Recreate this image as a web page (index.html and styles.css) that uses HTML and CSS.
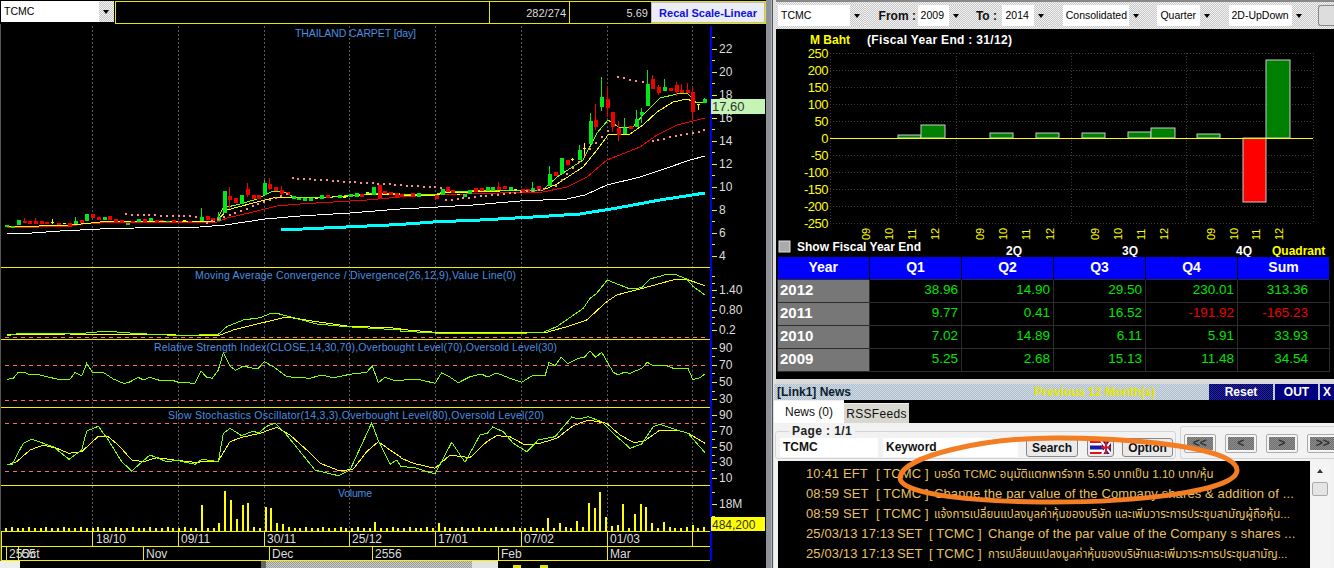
FILE: index.html
```html
<!DOCTYPE html>
<html>
<head>
    <title>TCMC Chart</title>
    <link rel="stylesheet" href="styles.css">
</head>
<body>
<div class="screen">

    <!-- Left: price chart -->
    <div class="chart-side">
        <div class="chart-top">
            <div class="combo combo-symbol">
                <div class="combo-field">TCMC</div>
                <div class="combo-arrow"></div>
            </div>
            <div class="info-bar">
                <div class="info-cell info-wide"></div>
                <div class="info-cell info-count">282/274</div>
                <div class="info-cell info-val">5.69</div>
                <button class="recal-button">Recal Scale-Linear</button>
            </div>
        </div>

        <svg id="chart" class="chart" viewBox="0 24 766 537" width="766" height="537">
            <g id="grid"></g>
            <g id="series"></g>

            <g class="pane-title">
                <text x="295" y="37" textLength="121">THAILAND CARPET [day]</text>
                <text x="195" y="279" textLength="321">Moving Average Convergence / Divergence(26,12,9),Value Line(0)</text>
                <text x="154" y="351" textLength="403">Relative Strength Index(CLOSE,14,30,70),Overbought Level(70),Oversold Level(30)</text>
                <text x="168" y="419" textLength="376">Slow Stochastics Oscillator(14,3,3),Overbought Level(80),Oversold Level(20)</text>
                <text x="338" y="497" textLength="34">Volume</text>
            </g>

            <g class="axis-label">
                <text x="719" y="53">22</text>
                <text x="719" y="76">20</text>
                <text x="719" y="99">18</text>
                <text x="719" y="122">16</text>
                <text x="719" y="145">14</text>
                <text x="719" y="168">12</text>
                <text x="719" y="191">10</text>
                <text x="719" y="214">8</text>
                <text x="719" y="237">6</text>
                <text x="719" y="260">4</text>
                <text x="719" y="294">1.40</text>
                <text x="719" y="314">0.80</text>
                <text x="719" y="334">0.2</text>
                <text x="719" y="352">90</text>
                <text x="719" y="369">70</text>
                <text x="719" y="386">50</text>
                <text x="719" y="403">30</text>
                <text x="719" y="419">90</text>
                <text x="719" y="435">70</text>
                <text x="719" y="451">50</text>
                <text x="719" y="466">30</text>
                <text x="719" y="482">10</text>
                <text x="719" y="508">18M</text>
            </g>

            <rect class="badge-last" x="711" y="99" width="54" height="15"></rect>
            <text class="badge-text" x="712" y="111">17.60</text>
            <rect class="badge-vol" x="711" y="517" width="54" height="14"></rect>
            <text class="badge-text small" x="712" y="529">484,200</text>

            <g class="axis-label">
                <text x="96" y="543">18/10</text>
                <text x="181" y="543">09/11</text>
                <text x="267" y="543">30/11</text>
                <text x="352" y="543">25/12</text>
                <text x="438" y="543">17/01</text>
                <text x="524" y="543">07/02</text>
                <text x="610" y="543">01/03</text>
                <text x="9" y="558">2555</text>
                <text x="21" y="558">Oct</text>
                <text x="146" y="558">Nov</text>
                <text x="272" y="558">Dec</text>
                <text x="375" y="558">2556</text>
                <text x="501" y="558">Feb</text>
                <text x="610" y="558">Mar</text>
            </g>
        </svg>

        <div class="hscroll">
            <div class="hscroll-btn"></div>
            <div class="hscroll-track"></div>
            <div class="hscroll-grip"></div>
            <div class="hscroll-thumb"></div>
            <div class="hscroll-end"></div>
            <div class="hscroll-mark"></div>
            <div class="hscroll-mark"></div>
        </div>
    </div>

    <div class="divider"></div>

    <!-- Right: financials + news -->
    <div class="info-side">
        <div class="fin-panel">
            <div class="toolbar">
                <div class="combo combo-name"><div class="combo-field">TCMC</div><div class="combo-arrow"></div></div>
                <span class="tool-label from-label">From :</span>
                <div class="combo combo-year"><div class="combo-field">2009</div><div class="combo-arrow"></div></div>
                <span class="tool-label to-label">To :</span>
                <div class="combo combo-year"><div class="combo-field">2014</div><div class="combo-arrow"></div></div>
                <div class="combo combo-cons"><div class="combo-field">Consolidated</div><div class="combo-arrow"></div></div>
                <div class="combo combo-quarter"><div class="combo-field">Quarter</div><div class="combo-arrow"></div></div>
                <div class="combo combo-mode"><div class="combo-field">2D-UpDown</div><div class="combo-arrow"></div></div>
                <div class="tool-stub"></div>
            </div>

            <svg class="bars" viewBox="776 29 558 228" width="558" height="228">
                <text class="bars-unit" x="810" y="44">M Baht</text>
                <text class="bars-head" x="867" y="44" textLength="145">(Fiscal Year End : 31/12)</text>

                <path class="bars-grid" d="M830 53.5H1313M830 70.5H1313M830 87.5H1313M830 104.5H1313M830 121.5H1313M830 155.5H1313M830 172.5H1313M830 189.5H1313M830 206.5H1313M830 223.5H1313M830.5 53V223M956.5 53V223M1071.5 53V223M1186.5 53V223M1313.5 53V223"/>

                <rect class="bar-up" x="898" y="135" width="23" height="3"/>
                <rect class="bar-up" x="921" y="125" width="24" height="13"/>
                <rect class="bar-up" x="990" y="133" width="23" height="5"/>
                <rect class="bar-up" x="1036" y="133" width="23" height="5"/>
                <rect class="bar-up" x="1082" y="133" width="23" height="5"/>
                <rect class="bar-up" x="1128" y="132" width="23" height="6"/>
                <rect class="bar-up" x="1151" y="128" width="24" height="10"/>
                <rect class="bar-up" x="1197" y="134" width="23" height="4"/>
                <rect class="bar-up" x="1266" y="60" width="24" height="78"/>
                <rect class="bar-down" x="1243" y="138" width="23" height="64"/>
                <path class="bars-zero" d="M830 138.5H1313"/>

                <g class="bars-y">
                    <text x="828" y="58">250</text>
                    <text x="828" y="75">200</text>
                    <text x="828" y="92">150</text>
                    <text x="828" y="109">100</text>
                    <text x="828" y="126">50</text>
                    <text x="828" y="143">0</text>
                    <text x="828" y="160">-50</text>
                    <text x="828" y="177">-100</text>
                    <text x="828" y="194">-150</text>
                    <text x="828" y="211">-200</text>
                    <text x="828" y="228">-250</text>
                </g>

                <g class="bars-x">
                    <text transform="translate(870 240) rotate(-90)">09</text>
                    <text transform="translate(893 240) rotate(-90)">10</text>
                    <text transform="translate(916 240) rotate(-90)">11</text>
                    <text transform="translate(939 240) rotate(-90)">12</text>
                    <text transform="translate(984 240) rotate(-90)">09</text>
                    <text transform="translate(1007 240) rotate(-90)">10</text>
                    <text transform="translate(1030 240) rotate(-90)">11</text>
                    <text transform="translate(1054 240) rotate(-90)">12</text>
                    <text transform="translate(1099 240) rotate(-90)">09</text>
                    <text transform="translate(1122 240) rotate(-90)">10</text>
                    <text transform="translate(1145 240) rotate(-90)">11</text>
                    <text transform="translate(1168 240) rotate(-90)">12</text>
                    <text transform="translate(1215 240) rotate(-90)">09</text>
                    <text transform="translate(1238 240) rotate(-90)">10</text>
                    <text transform="translate(1260 240) rotate(-90)">11</text>
                    <text transform="translate(1283 240) rotate(-90)">12</text>
                </g>

                <rect class="bars-check" x="779" y="241" width="11" height="11"/>
                <text class="bars-head" x="797" y="251" textLength="124">Show Fiscal Year End</text>
                <text class="bars-head" x="1006" y="255">2Q</text>
                <text class="bars-head" x="1122" y="255">3Q</text>
                <text class="bars-head" x="1236" y="255">4Q</text>
                <text class="bars-unit" x="1272" y="255">Quadrant</text>
            </svg>

            <table class="fin-table">
                <tr><th>Year</th><th>Q1</th><th>Q2</th><th>Q3</th><th>Q4</th><th>Sum</th></tr>
                <tr><td>2012</td><td>38.96</td><td>14.90</td><td>29.50</td><td>230.01</td><td>313.36</td></tr>
                <tr><td>2011</td><td>9.77</td><td>0.41</td><td>16.52</td><td class="neg">-191.92</td><td class="neg">-165.23</td></tr>
                <tr><td>2010</td><td>7.02</td><td>14.89</td><td>6.11</td><td>5.91</td><td>33.93</td></tr>
                <tr><td>2009</td><td>5.25</td><td>2.68</td><td>15.13</td><td>11.48</td><td>34.54</td></tr>
            </table>
        </div>

        <div class="news-panel">
            <div class="news-head">
                <span class="news-title">[Link1] News</span>
                <span class="news-period">Previous 12 Month(s)</span>
                <button class="head-btn btn-reset">Reset</button>
                <button class="head-btn btn-out">OUT</button>
                <button class="head-btn btn-x">X</button>
            </div>

            <div class="news-tabs">
                <div class="tab active">News (0)</div>
                <div class="tab">RSSFeeds</div>
            </div>

            <div class="news-form">
                <fieldset class="search-group">
                    <legend>Page : 1/1</legend>
                    <div class="field field-symbol">TCMC</div>
                    <div class="field field-keyword">Keyword</div>
                    <button class="form-btn btn-search">Search</button>
                    <button class="form-btn btn-flag">
                        <svg width="21" height="13" viewBox="0 0 21 13">
                            <rect width="21" height="13" fill="#fff"/>
                            <rect width="21" height="2" fill="#e01020"/>
                            <rect y="11" width="21" height="2" fill="#e01020"/>
                            <rect y="4.5" width="21" height="4" fill="#1818a0"/>
                            <path d="M11 0L21 0V13H14Z" fill="#20207a"/>
                            <path d="M11 0L21 13M21 0L12 13" stroke="#fff" stroke-width="2"/>
                            <path d="M16 0V13M11 6.5H21" stroke="#e01020" stroke-width="2"/>
                        </svg>
                    </button>
                    <button class="form-btn btn-option">Option</button>
                </fieldset>
                <div class="nav-group">
                    <button class="nav-btn"><span>&lt;&lt;</span></button>
                    <button class="nav-btn"><span>&lt;</span></button>
                    <button class="nav-btn"><span>&gt;</span></button>
                    <button class="nav-btn nav-last"><span>&gt;&gt;</span></button>
                </div>
            </div>

            <div class="news-body">
                <div class="news-list">
                    <div class="news-row"><span>10:41</span><span>EFT</span><span>[ TCMC ]</span><span class="thai">บอร์ด TCMC อนุมัติแตกพาร์จาก 5.50 บาทเป็น 1.10 บาท/หุ้น</span></div>
                    <div class="news-row"><span>08:59</span><span>SET</span><span>[ TCMC ]</span><span>Change  the par value of the Company shares &amp; addition of ...</span></div>
                    <div class="news-row"><span>08:59</span><span>SET</span><span>[ TCMC ]</span><span class="thai">แจ้งการเปลี่ยนแปลงมูลค่าหุ้นของบริษัท และเพิ่มวาระการประชุมสามัญผู้ถือหุ้น...</span></div>
                    <div class="news-row dated"><span>25/03/13 17:13</span><span>SET</span><span>[ TCMC ]</span><span>Change of the par value of the Company s shares ...</span></div>
                    <div class="news-row dated"><span>25/03/13 17:13</span><span>SET</span><span>[ TCMC ]</span><span class="thai">การเปลี่ยนแปลงมูลค่าหุ้นของบริษัทและเพิ่มวาระการประชุมสามัญ...</span></div>
                </div>
                <div class="vscroll">
                    <div class="vscroll-up"></div>
                    <div class="vscroll-thumb"></div>
                </div>
            </div>
        </div>
    </div>

    <!-- Hand drawn marker over the news -->
    <svg class="scribble" viewBox="0 0 1334 568" width="1334" height="568">
        <path d="M900 477C903 456 985 437 1062 438C1150 439 1236 449 1237 470C1238 492 1130 503 1040 502C962 501 898 493 900 477Z"/>
    </svg>
</div>

<script src="chart.js"></script>
</body>
</html>
```

FILE: styles.css
```css
* {
    box-sizing: border-box;
}

body {
    margin: 0;
    background: #000;
    font-family: "Liberation Sans", Arial, sans-serif;
    overflow: hidden;
}

button {
    font-family: inherit;
    padding: 0;
}

.screen {
    position: relative;
    display: grid;
    grid-template-columns: 766px 10px 558px;
    width: 1334px;
    height: 568px;
    overflow: hidden;
}

/* Left side */
.chart-side {
    display: flex;
    flex-direction: column;
    height: 568px;
}

.chart-top {
    display: flex;
    height: 24px;
    padding-top: 1px;
    gap: 1px;
}

.combo {
    display: flex;
    background: repeating-conic-gradient(#c4c4c4 0 25%, #f4f4f4 0 50%) 0 0 / 2px 2px;
}

.combo-field {
    flex: 1;
    background: #fff;
    color: #000;
    font-size: 10.5px;
    line-height: 21px;
    padding-left: 3px;
    white-space: nowrap;
}

.combo-arrow {
    position: relative;
    width: 15px;
}

.combo-arrow::after {
    content: "";
    position: absolute;
    left: 4px;
    top: 9px;
    border-left: 3px solid transparent;
    border-right: 3px solid transparent;
    border-top: 4px solid #000;
}

.combo-symbol {
    width: 113px;
    height: 21px;
    margin-left: 1px;
}

.info-bar {
    display: flex;
    width: 651px;
    height: 23px;
    border: 1px solid #e6e600;
}

.info-cell {
    color: #ddd;
    font-size: 11px;
    line-height: 23px;
    text-align: right;
    padding-right: 3px;
    border-right: 1px solid #e6e600;
}

.info-wide {
    width: 374px;
}

.info-count {
    width: 80px;
}

.info-val {
    width: 81px;
    border-right: none;
}

.recal-button {
    width: 114px;
    background: #ececf4;
    color: #1010e0;
    border: 1px solid #bbb;
    font-size: 11px;
    font-weight: bold;
}

.chart {
    display: block;
    flex: none;
}

.pane-title text {
    fill: #4a8fe0;
    font-size: 10.5px;
}

.axis-label text {
    fill: #ddd;
    font-size: 12px;
}

.badge-last {
    fill: #c4f5b4;
}

.badge-vol {
    fill: #ffff00;
}

.badge-text {
    fill: #333;
    font-size: 13px;
}

.badge-text.small {
    font-size: 12px;
}

.hscroll {
    display: flex;
    height: 7px;
}

.hscroll-btn {
    width: 20px;
    background: #eee;
}

.hscroll-track {
    width: 241px;
    background: #000;
}

.hscroll-grip {
    width: 5px;
    background: #666;
}

.hscroll-thumb {
    width: 206px;
    background: repeating-conic-gradient(#999 0 25%, #ccc 0 50%) 0 0 / 2px 2px;
}

.hscroll-end {
    width: 26px;
    background: #e4e4e4;
}

.hscroll-mark {
    width: 8px;
    height: 3px;
    margin: 4px 0 0 15px;
    background: #e6e600;
}

.hscroll-mark + .hscroll-mark {
    margin-left: 19px;
}

.divider {
    background: linear-gradient(to right, #8f9299 0 50%, #aeb2b8 50% 65%, #555 65% 72%, #e0e0e0 72%);
}

/* Right side */
.info-side {
    display: flex;
    flex-direction: column;
    height: 568px;
}

.fin-panel {
    height: 384px;
    padding-bottom: 5px;
    background: #000;
    border-bottom: 5px solid #d8dadc;
}

.toolbar {
    display: flex;
    align-items: center;
    height: 29px;
    padding: 3px 0 3px 2px;
    background: repeating-conic-gradient(#c8c8c8 0 25%, #f2f2f2 0 50%) 0 0 / 2px 2px;
    border-top: 2px solid #888;
}

.toolbar .combo {
    height: 21px;
}

.combo-name {
    width: 88px;
}

.combo-year {
    width: 47px;
}

.combo-cons {
    width: 83px;
    margin-left: 14px;
}

.combo-quarter {
    width: 58px;
    margin-left: 13px;
}

.combo-mode {
    width: 80px;
    margin-left: 14px;
}

.tool-label {
    font-size: 12px;
    font-weight: bold;
    color: #111;
    white-space: nowrap;
}

.from-label {
    width: 37px;
    margin-left: 14px;
    margin-right: 2px;
}

.to-label {
    width: 27px;
    margin-left: 12px;
}

.tool-stub {
    width: 16px;
    height: 21px;
    margin-left: 11px;
    background: #ddd;
    border: 1px solid #888;
    border-right: none;
    border-radius: 3px 0 0 3px;
}

.bars {
    display: block;
}

.bars-unit {
    fill: #ffff00;
    font-size: 12px;
    font-weight: bold;
}

.bars-head {
    fill: #fff;
    font-size: 12px;
    font-weight: bold;
}

.bars-grid {
    stroke: #3c3c3c;
    stroke-dasharray: 1 2;
    fill: none;
}

.bars-zero {
    stroke: #ffff00;
    fill: none;
}

.bar-up {
    fill: #008000;
    stroke: #ccc;
}

.bar-down {
    fill: #ff0000;
    stroke: #ccc;
}

.bars-y text {
    fill: #ffff00;
    font-size: 13px;
    text-anchor: end;
    letter-spacing: -0.5px;
}

.bars-x text {
    fill: #ffff00;
    font-size: 11px;
}

.bars-check {
    fill: #aaa;
    stroke: #ddd;
}

.fin-table {
    width: 553px;
    margin-left: 1px;
    border-collapse: collapse;
    table-layout: fixed;
}

.fin-table th {
    height: 22px;
    padding: 0 0 2px;
    background: #0000ff;
    color: #fff;
    font-size: 14px;
    border-right: 1px solid #000;
}

.fin-table td {
    height: 23px;
    padding: 0 3px 2px 0;
    color: #00e600;
    font-size: 13.5px;
    text-align: right;
    border: 1px solid #2c2c2c;
}

.fin-table td:first-child {
    padding-left: 2px;
    background: repeating-conic-gradient(#666 0 25%, #888 0 50%) 0 0 / 2px 2px;
    color: #fff;
    font-size: 15px;
    font-weight: bold;
    text-align: left;
}

.fin-table td:last-child {
    padding-right: 21px;
}

.fin-table td.neg {
    color: #f00000;
}

.news-panel {
    display: flex;
    flex-direction: column;
    flex: 1;
    min-height: 0;
    margin-left: -2px;
}

.news-head {
    display: flex;
    align-items: stretch;
    height: 16px;
    background: repeating-conic-gradient(#aebccc 0 25%, #d2dce4 0 50%) 0 0 / 2px 2px;
}

.news-title {
    width: 260px;
    padding-left: 3px;
    color: #0a1c2e;
    font-size: 12px;
    font-weight: bold;
    line-height: 16px;
}

.news-period {
    width: 175px;
    color: #e6e600;
    font-size: 12px;
    font-weight: bold;
    line-height: 16px;
}

.head-btn {
    background: #000080;
    color: #fff;
    border: none;
    font-size: 12px;
    font-weight: bold;
}

.btn-reset {
    width: 64px;
    margin-right: 2px;
    background: repeating-conic-gradient(#000070 0 25%, #28288c 0 50%) 0 0 / 2px 2px;
}

.btn-out {
    width: 43px;
    margin-right: 2px;
}

.btn-x {
    width: 14px;
}

.news-tabs {
    display: flex;
    align-items: flex-end;
    height: 23px;
    background: #000;
    padding-left: 0;
}

.tab {
    width: 65px;
    height: 20px;
    background: #d8d8d0;
    color: #111;
    font-size: 12px;
    font-weight: 500;
    line-height: 20px;
    text-align: center;
    letter-spacing: 0.3px;
    border-top: 1px solid #eee;
}

.tab.active {
    width: 70px;
    height: 23px;
    background: #fff;
    line-height: 22px;
    letter-spacing: 0;
}

.news-form {
    display: flex;
    gap: 4px;
    height: 38px;
    background: #f2f2f2;
    padding-left: 1px;
}

.search-group {
    display: flex;
    align-items: center;
    width: 403px;
    height: 33px;
    margin: 3px 0 0 0;
    padding: 0 0 0 4px;
    border: 1px solid #d4d4d4;
    border-radius: 3px;
}

.search-group legend {
    margin-left: 9px;
    padding: 0 3px;
    color: #222;
    font-size: 12px;
    font-weight: bold;
    line-height: 11px;
    letter-spacing: 0.4px;
}

.field {
    height: 19px;
    background: #fff;
    color: #111;
    font-size: 12px;
    font-weight: bold;
    line-height: 19px;
    padding-left: 3px;
}

.field-symbol {
    width: 98px;
    margin-right: 5px;
}

.field-keyword {
    width: 135px;
    margin-right: 8px;
}

.form-btn {
    height: 19px;
    background: #eaeaea;
    color: #111;
    border: 1px solid #888;
    border-radius: 3px;
    font-size: 12px;
    font-weight: bold;
}

.btn-search {
    width: 52px;
    margin-right: 9px;
}

.btn-flag {
    display: flex;
    align-items: center;
    justify-content: center;
    width: 27px;
    margin-right: 8px;
}

.btn-option {
    width: 51px;
}

.nav-group {
    display: flex;
    gap: 9px;
    width: 155px;
    height: 33px;
    margin-top: 3px;
    padding: 7px 0 0 3px;
    border: 1px solid #d4d4d4;
    border-right: none;
    border-radius: 3px 0 0 3px;
    overflow: hidden;
}

.nav-btn {
    flex: none;
    width: 32px;
    height: 19px;
    padding: 2px;
    background: #f4f4f4;
    border: 1px solid #aaa;
    border-radius: 2px;
}

.nav-btn span {
    display: block;
    height: 100%;
    background: repeating-conic-gradient(#707070 0 25%, #8c8c8c 0 50%) 0 0 / 2px 2px;
    color: #333;
    font-size: 12px;
    font-weight: bold;
    line-height: 13px;
}

.news-body {
    display: flex;
    flex: 1;
    min-height: 0;
    padding: 0 4px 0 4px;
    background: #f2f2f2;
}

.news-list {
    flex: 1;
    padding: 3px 0 0 28px;
    background: #000;
    color: #e8c264;
    font-family: "Liberation Sans", "Noto Sans Thai", "Noto Sans CJK SC", sans-serif;
    font-size: 13px;
    letter-spacing: 0.12px;
    overflow: hidden;
}

.news-row {
    display: grid;
    grid-template-columns: 37px 33px 58px 1fr;
    height: 20px;
    line-height: 20px;
    white-space: nowrap;
}

.news-row.dated {
    grid-template-columns: 91px 32px 59px 1fr;
}

.thai {
    font-size: 11.5px;
    letter-spacing: 0;
}

.vscroll {
    width: 20px;
    padding: 0 2px;
    background: #f4f4f4;
}

.vscroll-up {
    position: relative;
    height: 21px;
}

.vscroll-up::after {
    content: "";
    position: absolute;
    left: 5px;
    top: 8px;
    border-left: 3px solid transparent;
    border-right: 3px solid transparent;
    border-bottom: 4px solid #333;
}

.vscroll-thumb {
    height: 14px;
    background: #e4e4e4;
    border: 1px solid #aaa;
    border-radius: 2px;
}

.scribble {
    position: absolute;
    left: 0;
    top: 0;
    pointer-events: none;
}

.scribble path {
    fill: none;
    stroke: #f37d22;
    stroke-width: 5;
}
```

FILE: chart.js
```javascript
const NS = "http://www.w3.org/2000/svg";
const grid = document.getElementById("grid");
const series = document.getElementById("series");

function add(parent, tag, attrs) {
    const el = document.createElementNS(NS, tag);
    for (const k in attrs) el.setAttribute(k, attrs[k]);
    el.setAttribute("shape-rendering", "crispEdges");
    parent.appendChild(el);
    return el;
}

function hline(parent, x1, x2, y, color, extra) {
    add(parent, "line", Object.assign({ x1, x2, y1: y, y2: y, stroke: color }, extra));
}

function vline(parent, x, y1, y2, color, extra) {
    add(parent, "line", Object.assign({ x1: x, x2: x, y1, y2, stroke: color }, extra));
}

// points read off at 3x: "x,y x,y" -> real pixels
function zoomed(str, ox, oy) {
    return str.trim().split(/\s+/).map(p => {
        const [x, y] = p.split(",").map(Number);
        return (ox + x / 3).toFixed(1) + "," + (oy + y / 3).toFixed(1);
    }).join(" ");
}

function poly(points, color, width) {
    add(series, "polyline", { points, fill: "none", stroke: color, "stroke-width": width || 1 });
}

// Grid and pane frames
const YEL = "#f0f000";
const dashes = { "stroke-dasharray": "2 2" };
[92.5, 178.5, 264.5, 349.5, 435.5, 521.5, 607.5, 692.5].forEach(x => {
    vline(grid, x, 26, 531, "#5a5a5a", dashes);
    vline(grid, x, 531, 546, YEL);
});
[267.5, 339.5, 407.5, 485.5].forEach(y => hline(grid, 1, 710, y, YEL));
[531.5, 546.5, 560.5].forEach(y => hline(grid, 1, 710, y, YEL));
vline(grid, 1.5, 531, 561, YEL);
[6.5, 18.5, 143.5, 269.5, 372.5, 498.5, 607.5].forEach(x => vline(grid, x, 546, 561, YEL));
vline(grid, 0.5, 24, 561, "#555");

const pink = { "stroke-dasharray": "4 4" };
[337.5, 365.5, 400.5, 423.5, 471.5].forEach(y => hline(grid, 5, 706, y, "#ff6a6a", pink));

add(grid, "rect", { x: 710, y: 26, width: 2, height: 535, fill: "#0000f0" });

// axis ticks
for (let y = 37.5; y <= 260; y += 11.5) {
    const major = Math.round((y - 49) / 11.5) % 2 === 0;
    hline(grid, 712, major ? 717 : 715, Math.floor(y) + 0.5, YEL);
}
[276, 283, 290, 297, 303, 310, 317, 323, 330].forEach((y, i) => hline(grid, 712, i % 3 === 2 ? 717 : 715, y + 0.5, YEL));
[348, 356, 365, 373, 382, 391, 399].forEach((y, i) => hline(grid, 712, i % 2 ? 715 : 717, y + 0.5, YEL));
[415, 423, 431, 439, 447, 455, 462, 470, 478].forEach((y, i) => hline(grid, 712, i % 2 ? 715 : 717, y + 0.5, YEL));
[492, 504, 516].forEach((y, i) => hline(grid, 712, i === 1 ? 717 : 715, y + 0.5, YEL));

// Price moving averages, real pixels
poly("281,230 400,224.5 433,222 480,220 533,217 580,214 617,208 660,200 705,193", "#00ffff", 3);
poly("7,234 32,233 60,231 100,229 135,228 200,227 225,225 265,219 300,216 350,213 400,209 438,207 473,205 520,201 567,199 585,195 607,185 640,177 667,168 690,160 705,156", "#fff");
poly("7,228 72,226 83,224 100,223 123,222 217,222 227,218 253,212 277,206 300,204 333,202 367,200 400,197 433,195 500,193 543,192 567,187 587,177 607,160 640,147 657,135 677,125 705,118", "#f00000");
poly("7,227 72,225 100,222 217,221 227,210 253,203 277,197 290,197 333,197 377,194 400,195 437,195 443,193 500,191 543,190 557,184 583,167 597,150 608,135 630,134 643,125 657,112 673,102 687,99 697,103 705,102", "#ffff00");
poly("217,220 223,208 240,204 257,199 273,191 287,193 293,197 333,197 377,193 400,194 437,194 443,192 500,190 543,190 557,177 583,160 597,133 608,120 620,128 633,127 643,115 660,98 677,94 687,93 697,103 705,102", "#80ff00");

// Candles at 3x: x, top, bottom, colour, high, low
const COLORS = { g: "#00e81a", r: "#f00000", y: "#ffff00" };
const candlesLeft = [
    [18,675,682,"g"],[36,677,683,"g"],[55,660,675,"g"],[71,663,668,"r",655],[88,663,672,"r"],[106,662,672,"r",655],
    [123,662,672,"r"],[139,665,672,"r"],[157,665,666,"y",658,672],[175,668,675,"r"],[192,670,671,"y"],[208,668,678,"r"],
    [225,662,672,"g",650],[242,660,670,"r"],[259,642,663,"g"],[277,642,655,"r"],[295,650,660,"r"],[312,651,660,"g"],
    [328,648,660,"r"],[345,658,665,"r"],[362,660,667,"r"],[380,668,675,"g"],[397,662,668,"r"],[415,657,667,"g"],
    [432,658,665,"r"],[449,655,664,"g"],[467,660,665,"r"],[484,660,664,"r"],[501,662,665,"g"],[518,661,665,"r"],
    [536,662,666,"r"],[553,660,661,"y"],[568,662,667,"r"],[586,662,663,"y"],[603,650,663,"g",625],[620,648,660,"r"],
    [637,653,662,"r"],[655,650,662,"g",636],[671,572,640,"g"],[688,587,600,"r",560,628],[706,593,610,"r"],[724,584,612,"g"],
    [740,566,585,"r",548,590],[758,585,598,"r"],[775,585,598,"r"],[792,550,585,"g",540],[808,553,567,"r",534,570],
    [826,561,572,"r"],[844,570,582,"r",558,590],[860,575,585,"r"],[878,588,598,"g"],[895,593,600,"g"],[912,593,602,"g"],
    [929,595,602,"g"],[947,595,596,"y"],[964,585,598,"g"],[982,585,595,"r"],[999,588,589,"y"],[1016,585,594,"g"],
    [1033,590,591,"y"],[1050,582,592,"g"],[1067,578,592,"g"],[1084,581,590,"r"],[1101,577,578,"y"],[1118,560,585,"g"],
    [1136,555,595,"r"],[1152,572,582,"r"],[1170,577,585,"r"],[1188,580,590,"r"]
];
const candlesRight = [
    [3,582,590,"r"],[37,580,590,"r"],[55,578,590,"g"],[88,586,587,"y"],[107,585,597,"r"],[125,567,585,"g"],
    [142,562,575,"r"],[157,570,578,"r"],[175,582,583,"y"],[192,582,590,"g"],[208,570,582,"g"],[225,565,575,"r"],
    [243,563,572,"r"],[260,562,572,"g"],[277,560,572,"g"],[295,560,570,"r",547],[312,557,568,"r"],[330,562,570,"g"],
    [346,567,568,"y",567,574],[365,568,575,"r"],[380,568,578,"r"],[397,565,575,"g",547],[414,558,572,"r"],
    [448,522,558,"g",498],[465,515,528,"r"],[484,474,522,"g"],[500,480,495,"r"],[517,478,479,"y",474,483],
    [536,450,480,"g",435],[553,445,446,"y",430,465],[570,363,432,"g",338],[586,360,382,"r",312,390],
    [604,291,320,"g",232,332],[621,297,325,"r",262,350],[637,337,382,"r",337,395],[655,385,405,"r",362,423],
    [673,385,403,"g",355],[690,378,388,"r"],[707,357,381,"g",330],[724,335,345,"g",325,370],[741,252,318,"g",210],
    [757,238,268,"r",225],[775,262,278,"r",255,285],[793,262,272,"g",238],[810,264,273,"r"],[827,255,275,"r",245,288],
    [844,270,278,"r",253],[861,270,278,"r",250],[877,275,335,"r",262,360],[895,312,313,"y",312,330],[913,298,310,"g",295]
];

function drawCandle(c, ox) {
    const [zx, top, bot, col, hi, lo] = c;
    const x = Math.round(ox + zx / 3);
    const color = COLORS[col];
    const t = Math.round(top / 3), b = Math.round(bot / 3);
    const h = hi !== undefined ? Math.round(hi / 3) : t;
    const l = lo !== undefined ? Math.round(lo / 3) : b;
    add(series, "rect", { x, y: h, width: 1, height: Math.max(l - h, 1), fill: color });
    if (col === "y") {
        add(series, "rect", { x: x - 1, y: t, width: 3, height: 1, fill: color });
    } else {
        add(series, "rect", { x: x - 1, y: t, width: 4, height: Math.max(b - t, 1), fill: color });
    }
}
candlesLeft.forEach(c => drawCandle(c, 0));
candlesRight.forEach(c => drawCandle(c, 400));

// SAR style dots at 3x, from start to end in steps of one bar
function dots(x1, y1, x2, y2) {
    const n = Math.round((x2 - x1) / 17.3);
    for (let i = 0; i <= n; i++) {
        add(series, "rect", {
            x: Math.round((x1 + (x2 - x1) * i / n) / 3),
            y: Math.round((y1 + (y2 - y1) * i / n) / 3),
            width: 2, height: 2, fill: "#ff8a8a"
        });
    }
}
dots(375, 640, 585, 647);
dots(617, 667, 858, 578);
dots(875, 532, 1320, 560);
dots(1335, 598, 1630, 565);
dots(1665, 555, 1820, 390);
dots(1850, 228, 1925, 243);
dots(1955, 420, 2110, 388);

// Indicators: left half and right half, 3x with y from 265
const LIME = "#80ff00";
const both = (a, b) => zoomed(a, 0, 265) + " " + zoomed(b, 400, 265);

poly(both("20,209 200,207 400,208 655,212 700,195 780,175 860,156 950,170 1040,183 1200,190",
    "0,193 120,203 360,203 440,202 500,185 560,165 620,110 650,90 720,72 800,50 830,42 860,43 915,62"), "#ffff00");
poly(both("20,212 60,205 250,205 300,200 340,200 400,205 540,212 655,208 680,185 730,165 780,158 810,146 835,146 870,155 950,177 1040,185 1200,195",
    "0,198 120,205 360,205 430,202 470,185 550,130 570,100 590,85 622,45 690,72 725,68 750,42 800,28 830,30 860,42 880,65 915,90"), LIME);

poly(both("20,343 40,340 55,322 75,322 90,330 110,328 140,335 175,343 210,343 225,322 245,333 260,295 277,322 310,322 340,342 370,355 385,353 415,337 430,345 450,337 485,348 515,345 535,352 585,355 603,318 620,337 637,340 655,315 670,263 690,303 707,316 730,303 755,309 775,310 793,290 820,305 860,335 930,340 965,330 1000,338 1050,328 1100,322 1117,303 1135,353 1155,337 1180,345 1200,347",
    "0,346 50,342 105,355 125,323 145,333 175,353 210,335 245,327 262,336 290,324 330,340 365,352 400,330 435,333 447,292 465,303 483,277 503,296 535,280 553,277 570,258 587,277 605,262 640,322 655,330 672,322 690,325 725,310 742,292 760,302 780,303 795,300 820,310 865,312 878,343 895,341 915,327"), LIME);

poly(both("20,600 50,590 90,555 130,540 170,550 207,565 245,560 295,514 325,515 355,540 395,585 430,590 470,578 530,586 585,592 655,588 690,530 725,517 780,505 830,487 870,510 920,555 960,595 1020,618 1060,612 1100,560 1135,530 1170,555 1200,575",
    "0,578 40,595 105,610 150,570 210,578 260,530 290,512 330,515 375,540 420,535 470,520 520,482 565,465 620,475 660,510 700,532 730,530 780,495 830,495 865,505 915,535"), "#ffff00");
poly(both("20,597 35,600 70,535 95,522 130,535 160,545 207,583 245,555 260,498 295,484 325,525 365,590 395,618 450,570 500,590 530,586 585,598 605,583 655,590 670,505 690,490 725,512 760,498 775,505 800,484 825,475 860,510 945,615 1015,632 1050,615 1115,474 1135,527 1170,598 1190,585 1200,600",
    "0,605 40,607 105,627 155,532 195,592 240,510 262,505 278,486 310,500 340,535 380,560 415,525 465,515 515,456 535,462 565,455 605,470 640,505 690,550 725,537 760,485 780,478 830,495 865,505 890,535 915,563"), LIME);

// Volume bars: one per bar, tall ones listed by 3x x and top
const tall = {};
[[603,720],[655,774],[668,678],[686,705],[704,762],[722,720],[738,714],[792,725],[808,730],[825,775],[843,777],[1117,771],
 [1323,774],[1645,760],[1683,773],[1735,768],[1767,714],[1785,730],[1803,681],[1821,755],[1836,783],[1854,780],
 [1871,717],[1904,747],[1922,717],[1940,727],[1956,774],[1992,771],[2075,780]].forEach(([x, top]) => {
    tall[Math.round((x - 18) / 17.3)] = top;
});
for (let i = 0; i < 122; i++) {
    const top = tall[i] || (i % 3 === 1 ? 785 : 788);
    const y = Math.round(265 + top / 3);
    add(series, "rect", { x: Math.round(6 + i * 5.77) - 1, y, width: 2, height: 531 - y, fill: "#ffff00" });
}
```
